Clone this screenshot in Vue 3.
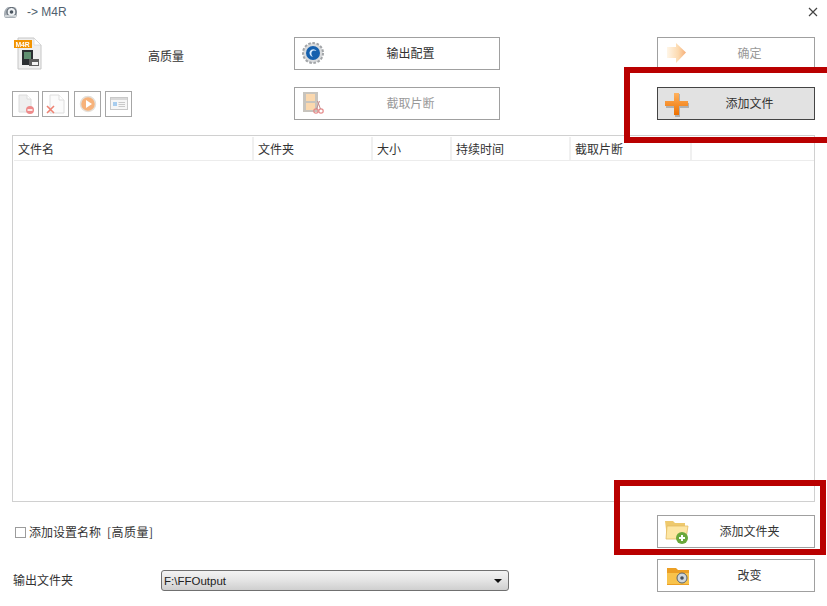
<script setup>
const columns = [
  { name: '文件名', width: 240 },
  { name: '文件夹', width: 119 },
  { name: '大小', width: 79 },
  { name: '持续时间', width: 119 },
  { name: '截取片断', width: 121 },
  { name: '', width: 122 },
]
</script>

<template>
  <div class="app">
    <header class="titlebar">
      <svg class="app-icon soft" width="15" height="14" viewBox="0 0 15 14">
        <path d="M1 9C1 5 3 3 5 2H11C13 2 14 4 14 8C14 12 13 13 11 13H3C2 13 1 12 1 9Z" fill="#a7aeb5" />
        <circle cx="8.500" cy="7" r="4.500" fill="#eef1f3" stroke="#4b5560" />
        <circle cx="8.500" cy="7" r="1.800" fill="#4b5560" />
        <path d="M2 11H13" stroke="#dfe3e6" stroke-width="1.500" />
      </svg>
      <span class="title">-&gt; M4R</span>
      <svg class="close" width="10" height="10" viewBox="0 0 10 10">
        <path d="M1 1L9 9M9 1L1 9" stroke="#444" stroke-width="1.200" fill="none" />
      </svg>
    </header>

    <section class="controls">
      <div class="preset">
        <svg class="soft" width="28" height="33" viewBox="0 0 28 33">
          <path d="M4 1H20L27 8V32H4Z" fill="#efefef" stroke="#c6c6c6" />
          <path d="M20 1V8H27Z" fill="#fff" stroke="#cfcfcf" stroke-width=".6" />
          <rect x="0" y="3" width="18" height="8" fill="#f29300" />
          <rect x="8" y="13" width="11" height="15" fill="#2a2e31" />
          <rect x="10" y="15" width="7" height="7" fill="#5f8f70" />
          <rect x="15" y="22" width="10" height="7" fill="#5c5c5c" />
          <rect x="18" y="25" width="6" height="3" fill="#f2f2f2" />
          <text x="1.400" y="9.600" class="badge-text">M4R</text>
        </svg>
        <span class="preset-name">高质量</span>
      </div>
      <button class="btn wide">
        <svg class="btn-icon soft" width="24" height="24" viewBox="0 0 24 24">
          <circle cx="12" cy="12" r="10" fill="#d9dbdd" stroke="#a2a5a8" stroke-width="2" stroke-dasharray="2.600 1.600" />
          <circle cx="12" cy="12" r="7" fill="#1560ae" />
          <path d="M15.500 10A3.800 3.800 0 1 0 12 15.800C10 14 9.500 10 13 9.500" fill="#d8ecff" />
        </svg>
        <span>输出配置</span>
      </button>
      <button class="btn side disabled">
        <svg class="btn-icon soft" width="24" height="24" viewBox="0 0 24 24">
          <defs>
            <linearGradient id="arrow" x1="0" y1="0" x2="1" y2="0">
              <stop offset="0" stop-color="#fff6e8" />
              <stop offset=".6" stop-color="#fcd9ae" />
              <stop offset="1" stop-color="#f6ae78" />
            </linearGradient>
          </defs>
          <path d="M3 6H12V2L22 11.500L12 22V17H3Z" fill="url(#arrow)" />
        </svg>
        <span>确定</span>
      </button>

      <div class="tools">
        <button class="tool">
          <svg class="soft" width="22" height="22" viewBox="0 0 22 22">
            <path d="M4 2H12L16 6V19H4Z" fill="#efefef" stroke="#dcdcdc" />
            <path d="M12 2V6H16" fill="#fff" stroke="#dcdcdc" />
            <circle cx="15" cy="17" r="4" fill="#ee8a8a" />
            <rect x="12.500" y="16.200" width="5" height="1.600" fill="#fff" />
          </svg>
        </button>
        <button class="tool">
          <svg class="soft" width="22" height="22" viewBox="0 0 22 22">
            <path d="M5 2H14L19 7V20H5Z" fill="#fbfbfb" stroke="#dedede" />
            <path d="M14 2V7H19" fill="#fff" stroke="#dedede" />
            <path d="M2 13L9 20M9 13L2 20" stroke="#ee8272" stroke-width="1.600" />
          </svg>
        </button>
        <button class="tool gap">
          <svg class="soft" width="20" height="20" viewBox="0 0 20 20">
            <circle cx="10" cy="10" r="7.500" fill="#f7b27a" stroke="#e4e0da" stroke-width="1.500" />
            <path d="M8 6L14 10L8 14Z" fill="#fff" />
          </svg>
        </button>
        <button class="tool">
          <svg class="soft" width="20" height="20" viewBox="0 0 20 20">
            <rect x="1.500" y="3.500" width="17" height="12" fill="#f6f6f6" stroke="#c9c9c9" />
            <rect x="2" y="4" width="16" height="2" fill="#d9d9d9" />
            <rect x="4" y="8" width="4" height="4" fill="#a8cdee" />
            <path d="M9.500 8.500H16M9.500 10.500H16M9.500 12.500H16" stroke="#c9c9c9" />
          </svg>
        </button>
      </div>
      <button class="btn wide disabled">
        <svg class="btn-icon soft" width="24" height="24" viewBox="0 0 24 24">
          <rect x="2" y="1" width="15" height="20" fill="#c8c4bd" />
          <rect x="5" y="3" width="9" height="7" fill="#fbd8ae" />
          <rect x="5" y="12" width="9" height="7" fill="#fbd8ae" />
          <circle cx="15" cy="20" r="2.200" fill="none" stroke="#e58a8a" stroke-width="1.200" />
          <circle cx="20" cy="20" r="2.200" fill="none" stroke="#e58a8a" stroke-width="1.200" />
          <path d="M15.500 18L18.500 10M19.500 18L16.500 10" stroke="#c58c8c" />
        </svg>
        <span>截取片断</span>
      </button>
      <button class="btn side active">
        <svg class="btn-icon soft" width="26" height="26" viewBox="0 0 26 26">
          <defs>
            <linearGradient id="plus" x1="0" y1="0" x2="0" y2="1">
              <stop offset="0" stop-color="#ffb25e" />
              <stop offset="1" stop-color="#ee7000" />
            </linearGradient>
          </defs>
          <path d="M11 3H16V12H25V17H16V26H11V17H2V12H11Z" fill="#8f8f8f" opacity=".6" />
          <path d="M10 2H15V10H24V15H15V24H10V15H1V10H10Z" fill="url(#plus)" />
        </svg>
        <span>添加文件</span>
      </button>
    </section>

    <section class="list">
      <div class="list-head">
        <div v-for="c in columns" :key="c.name" class="cell" :style="{ width: c.width + 'px' }">{{ c.name }}</div>
      </div>
    </section>

    <footer class="footer">
      <div class="foot-row">
        <label class="check"><span class="box"></span>添加设置名称<span class="tag">[高质量]</span></label>
        <button class="btn side">
          <svg class="btn-icon soft" width="26" height="26" viewBox="0 0 26 26">
            <path d="M1 2H9L11 4H21V19H3Z" fill="#eec96d" />
            <path d="M3 7H24L22 20H2Z" fill="#fde6a3" stroke="#e3bb63" stroke-width=".8" />
            <circle cx="18" cy="19" r="6" fill="#6aa83b" />
            <path d="M15 19H21M18 16V22" stroke="#fff" stroke-width="2" />
          </svg>
          <span>添加文件夹</span>
        </button>
      </div>
      <div class="foot-row">
        <div class="output">
          <span class="output-label">输出文件夹</span>
          <div class="select">
            <span>F:\FFOutput</span>
            <i class="caret"></i>
          </div>
        </div>
        <button class="btn side">
          <svg class="btn-icon soft" width="26" height="26" viewBox="0 0 26 26">
            <path d="M3 5H12L14 7H25V22H3Z" fill="#ec9f24" />
            <path d="M3 10H25V21H3Z" fill="#f8c34c" />
            <circle cx="18" cy="15" r="5" fill="#cfd6dc" stroke="#59636d" />
            <circle cx="18" cy="15" r="1.800" fill="#46505a" />
          </svg>
          <span>改变</span>
        </button>
      </div>
    </footer>

    <div class="mark mark-top"></div>
    <div class="mark mark-bottom"></div>
  </div>
</template>

<style>
html, body { margin: 0; background: #fff; overflow: hidden; }
</style>

<style scoped>
.app {
  position: relative;
  width: 827px;
  height: 606px;
  overflow: hidden;
  background: #fff;
  color: #333;
  font: 12px "Noto Sans CJK SC", "Liberation Sans", sans-serif;
  box-sizing: border-box;
  padding: 0 12px;
}
.soft { filter: blur(.35px); }
.titlebar {
  display: flex;
  align-items: center;
  height: 24px;
  margin-left: -9px;
}
.app-icon { margin-top: -1px; }
.title {
  margin-left: 9px;
  font: 12px "Liberation Sans", sans-serif;
  color: #50606e;
}
.close { margin-left: auto; margin-right: -3px; }
.controls {
  display: grid;
  grid-template-columns: 282px 206px 1fr;
  grid-template-rows: 33px 33px;
  row-gap: 17px;
  width: 803px;
  margin-top: 13px;
}
.controls > .side { justify-self: end; }
.preset { display: flex; align-items: center; padding-left: 2px; }
.preset-name { margin-left: 106px; margin-top: 3px; }
.btn {
  display: flex;
  align-items: center;
  position: relative;
  height: 33px;
  padding: 0;
  box-sizing: border-box;
  background: #fff;
  border: 1px solid #a0a0a0;
  border-radius: 0;
  color: #333;
  font: inherit;
}
.btn span { flex: 1; text-align: center; padding: 0 0 3px 27px; }
.btn-icon { position: absolute; left: 6px; top: 3px; }
.wide { width: 206px; }
.side { width: 158px; }
.disabled { color: #999; }
.active { background: #e2e2e2; border-color: #444; }
.tools { display: flex; align-items: center; gap: 3px; }
.tool {
  width: 27px;
  height: 26px;
  padding: 0;
  display: flex;
  align-items: center;
  justify-content: center;
  box-sizing: border-box;
  background: #fff;
  border: 1px solid #a6a6a6;
}
.gap { margin-left: 2px; margin-right: 1px; }
.list {
  width: 803px;
  height: 367px;
  margin-top: 15px;
  box-sizing: border-box;
  border: 1px solid #d0d0d0;
}
.list-head {
  display: flex;
  height: 24px;
  margin: 1px 0 0 1px;
  box-sizing: border-box;
  border-bottom: 1px solid #ececec;
}
.cell {
  box-sizing: border-box;
  padding-left: 4px;
  line-height: 23px;
  border-right: 2px solid #f0f0f0;
  flex: none;
}
.cell:last-child { border-right: 0; }
.footer { width: 803px; margin-top: 13px; display: flex; flex-direction: column; gap: 11px; }
.foot-row { display: flex; justify-content: space-between; align-items: center; }
.check { display: flex; align-items: center; margin: 0 0 0 3px; }
.tag { margin-left: 6px; letter-spacing: .5px; }
.box {
  width: 11px;
  height: 11px;
  margin: 2px 3px 0 0;
  box-sizing: border-box;
  border: 1px solid #9c9c9c;
}
.output { display: flex; align-items: center; align-self: flex-end; margin-bottom: 1px; }
.output-label { width: 149px; padding: 0 0 2px 1px; box-sizing: border-box; }
.select {
  display: flex;
  align-items: center;
  justify-content: space-between;
  width: 348px;
  height: 21px;
  box-sizing: border-box;
  padding: 0 6px 0 2px;
  border: 1px solid #707070;
  border-radius: 3px;
  background: linear-gradient(#f3f3f3, #e6e6e6 45%, #cfcfcf);
  color: #222;
  font: 11.500px "Liberation Sans", sans-serif;
}
.caret {
  width: 0;
  height: 0;
  border: 4.500px solid transparent;
  border-top: 4.500px solid #111;
  border-bottom: 0;
}
.mark {
  position: absolute;
  box-sizing: border-box;
  border: 6px solid #b90000;
}
.mark-top { left: 624px; top: 67px; width: 210px; height: 76px; }
.mark-bottom { left: 614px; top: 480px; width: 212px; height: 75px; }
.badge-text { font: bold 6.800px "Liberation Sans", sans-serif; fill: #fff; }
</style>
